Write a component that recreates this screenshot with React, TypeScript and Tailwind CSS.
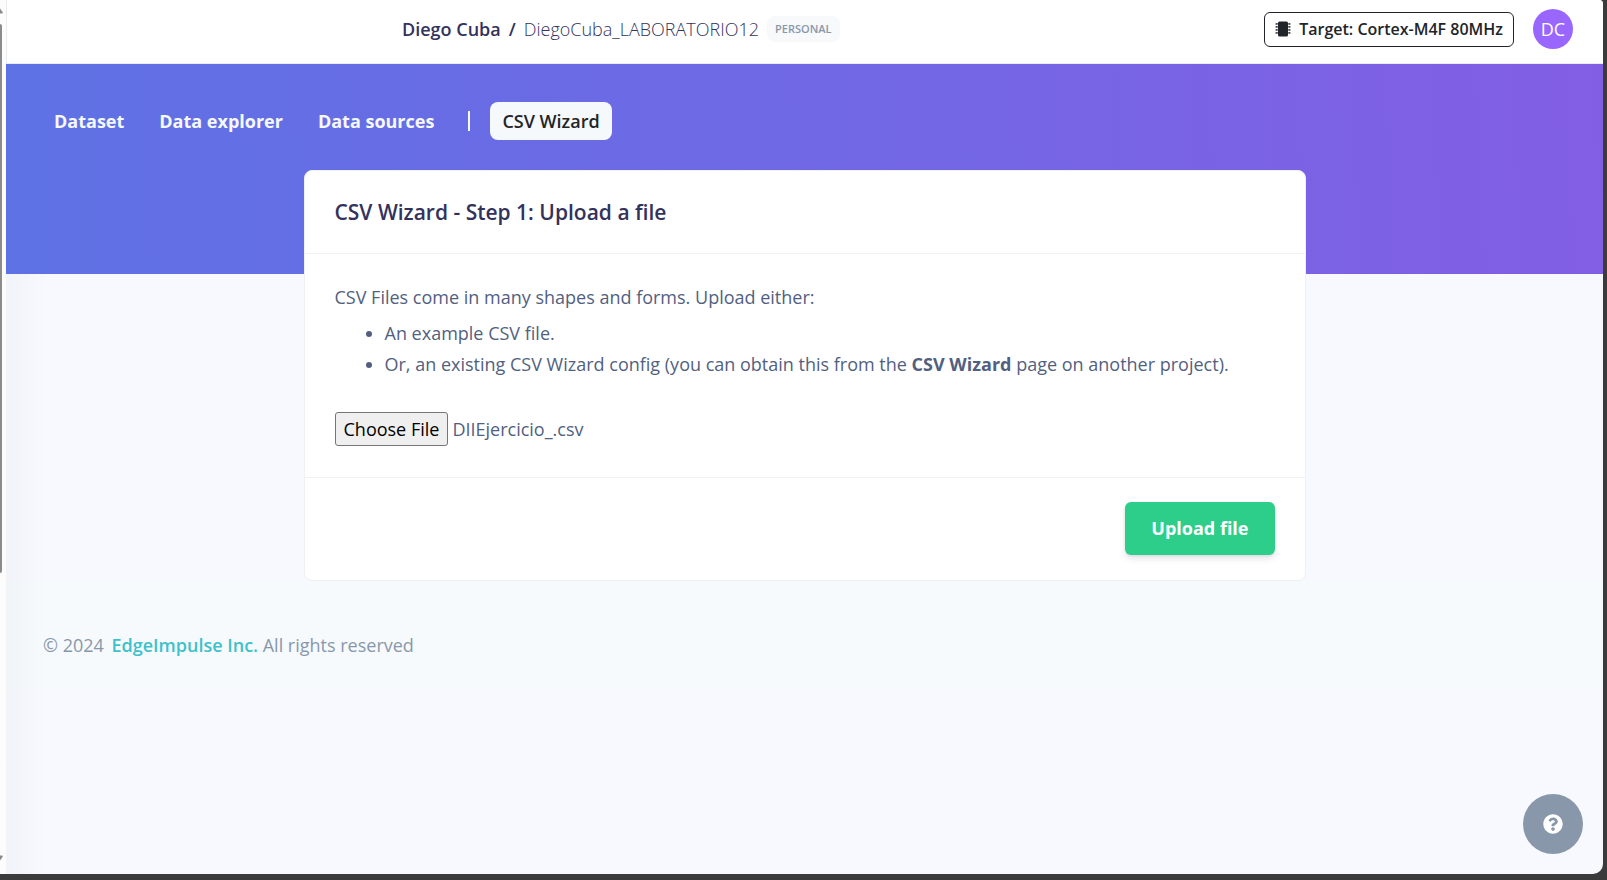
import { useEffect, useRef } from 'react';

const tabs = ['Dataset', 'Data explorer', 'Data sources'];

function ScrollEdge() {
  return (
    <div aria-hidden="true" className="flex w-[6px] shrink-0 flex-col justify-between bg-[#fcfcfc]">
      <svg className="mt-2 h-[6px] w-[3px]" viewBox="0 0 3 6">
        <path d="M0 0.5 2.7 4.2Q3 5.5 1.6 5.5H0Z" fill="#8b8b8b" />
      </svg>
      <div className="mt-[10px] h-[549px] w-[2px] rounded-r-[2px] bg-[#8b8b8b]" />
      <svg className="mt-auto mb-[13px] h-[6px] w-[3px]" viewBox="0 0 3 6">
        <path d="M0 5.5 2.7 1.8Q3 0.5 1.6 0.5H0Z" fill="#8b8b8b" />
      </svg>
    </div>
  );
}

function ChipIcon() {
  return (
    <svg className="h-4 w-4 shrink-0" viewBox="0 0 16 16" fill="#212529" aria-hidden="true">
      <rect x="3" y="0.5" width="10" height="15" rx="1.5" />
      {[2, 5, 8, 11].map((y) => (
        <g key={y}>
          <path d={`M2.6 ${y}v1.8H1.4v-.4H.4v-1h1V${y}z`} />
          <path d={`M13.4 ${y}v1.8h1.2v-.4h1v-1h-1V${y}z`} />
        </g>
      ))}
    </svg>
  );
}

function Header() {
  return (
    <header className="flex h-16 items-center justify-between border-b border-l border-[#e9ecef] bg-white pr-[30px] pb-[5px] pl-[395px]">
      <div className="flex items-center text-[18px] text-[#32325d]">
        <a href="#user" className="font-semibold">Diego Cuba</a>
        <span className="mx-2 font-semibold">/</span>
        <a href="#project" className="font-light">DiegoCuba_LABORATORIO12</a>
        <span className="ml-2 rounded-lg bg-[#f8f9fa] px-2 py-1 text-[11px] leading-[18px] font-semibold text-[#8898aa]">
          PERSONAL
        </span>
      </div>
      <div className="flex items-center gap-[19px]">
        <button type="button" className="flex h-[35px] items-center gap-2 rounded-md border border-[#212529] px-[10px] text-[16px] font-semibold text-[#212529]">
          <ChipIcon />
          Target: Cortex-M4F 80MHz
        </button>
        <button type="button" className="h-10 w-10 rounded-full bg-[#9966ff] text-[18px] text-white">DC</button>
      </div>
    </header>
  );
}

function UploadCard() {
  const input = useRef<HTMLInputElement>(null);

  useEffect(() => {
    const transfer = new DataTransfer();
    transfer.items.add(new File(['t,x\n'], 'DIIEjercicio_.csv', { type: 'text/csv' }));
    if (input.current) input.current.files = transfer.files;
  }, []);

  return (
    <form className="mx-auto w-full max-w-[1002px] rounded-lg border border-[#f0f1f4] bg-white" onSubmit={(e) => e.preventDefault()}>
      <div className="border-b border-[#f2f2f2] px-[30px] py-[26px]">
        <h1 className="text-[21px] leading-[30px] font-semibold text-[#32325d]">CSV Wizard - Step 1: Upload a file</h1>
      </div>
      <div className="px-[30px] pt-[28px] pb-[31px] text-[18px] leading-[31px]">
        <label htmlFor="csv-file" className="block">CSV Files come in many shapes and forms. Upload either:</label>
        <ul className="mt-[5px] list-disc pl-[50px]">
          <li>An example CSV file.</li>
          <li>
            Or, an existing CSV Wizard config (you can obtain this from the <strong className="font-bold">CSV Wizard</strong> page on another project).
          </li>
        </ul>
        <input
          ref={input}
          id="csv-file"
          type="file"
          accept=".csv"
          className="mt-8 block w-full leading-[27px] file:rounded-[3px] file:border file:border-solid file:border-[#767676] file:bg-[#efefef] file:px-2 file:pt-[3px] file:pb-[2px] file:text-black"
        />
      </div>
      <div className="flex justify-end border-t border-[#f2f2f2] px-[30px] pt-[24px] pb-[25px]">
        <button type="submit" className="h-[53px] rounded-md bg-[#2dce89] px-[26px] text-[18px] font-bold text-white shadow-[0_4px_6px_rgba(50,50,93,0.11),0_1px_3px_rgba(0,0,0,0.08)]">
          Upload file
        </button>
      </div>
    </form>
  );
}

export default function App() {
  return (
    <div className="flex h-screen flex-col bg-[#3b3b3b] pr-1 pb-[6px] font-['Open_Sans',sans-serif] text-[#525f7f]">
      <div className="flex min-h-0 flex-1 overflow-hidden rounded-tr-[4px] rounded-br-[10px] bg-[#f8f9fe]">
        <ScrollEdge />
        <div className="flex min-w-0 flex-1 flex-col">
          <Header />
          <main className="flex flex-1 flex-col bg-[linear-gradient(90deg,rgba(136,152,170,0.06),rgba(136,152,170,0)_40px)]">
            <div className="h-[210px] shrink-0 bg-[linear-gradient(87deg,#5e72e4,#825ee4)] pt-[38px]">
              <nav className="flex h-[38px] items-center pl-12 text-[18px] text-[#f6f9fc]">
                <div className="flex gap-[35px]">
                  {tabs.map((tab) => (
                    <a key={tab} href="#tab" className="font-bold">{tab}</a>
                  ))}
                </div>
                <span aria-hidden="true" className="mr-[20px] ml-[34px] h-5 w-[2px] bg-[#f6f9fc]" />
                <a href="#csv-wizard" aria-current="page" className="flex h-[38px] items-center rounded-lg bg-[#f6f9fc] px-3 font-semibold text-[#212529]">
                  CSV Wizard
                </a>
              </nav>
            </div>
            <div className="-mt-[104px]">
              <UploadCard />
            </div>
            <footer className="h-[108px] shrink-0 bg-[#f6fafd] bg-[linear-gradient(90deg,rgba(136,152,170,0.06),rgba(136,152,170,0)_40px)] px-[37px] py-12 text-[18px] leading-[32px] text-[#8898aa]">
              © 2024 <a href="#edge-impulse" className="ml-[3px] font-semibold text-[#3dc1cb]">EdgeImpulse Inc.</a> All rights reserved
            </footer>
          </main>
        </div>
      </div>
      <button type="button" aria-label="Help" className="fixed right-6 bottom-[26px] flex h-[60px] w-[60px] items-center justify-center rounded-full bg-[#8898aa]">
        <svg className="h-5 w-5" viewBox="0 0 512 512" fill="#fff" aria-hidden="true">
          <path d="M504 256c0 136.997-111.043 248-248 248S8 392.997 8 256C8 119.083 119.043 8 256 8s248 111.083 248 248zM262.655 90c-54.497 0-89.255 22.957-116.549 63.758-3.536 5.286-2.353 12.415 2.715 16.258l34.699 26.31c5.205 3.947 12.621 3.008 16.665-2.122 17.864-22.658 30.113-35.797 57.303-35.797 20.429 0 45.698 13.148 45.698 32.958 0 14.976-12.363 22.667-32.534 33.976C247.128 238.528 216 254.941 216 296v4c0 6.627 5.373 12 12 12h56c6.627 0 12-5.373 12-12v-1.333c0-28.462 83.186-29.647 83.186-106.667 0-58.002-60.165-102-116.531-102zM256 338c-25.365 0-46 20.635-46 46 0 25.364 20.635 46 46 46s46-20.636 46-46c0-25.365-20.635-46-46-46z" />
        </svg>
      </button>
    </div>
  );
}
